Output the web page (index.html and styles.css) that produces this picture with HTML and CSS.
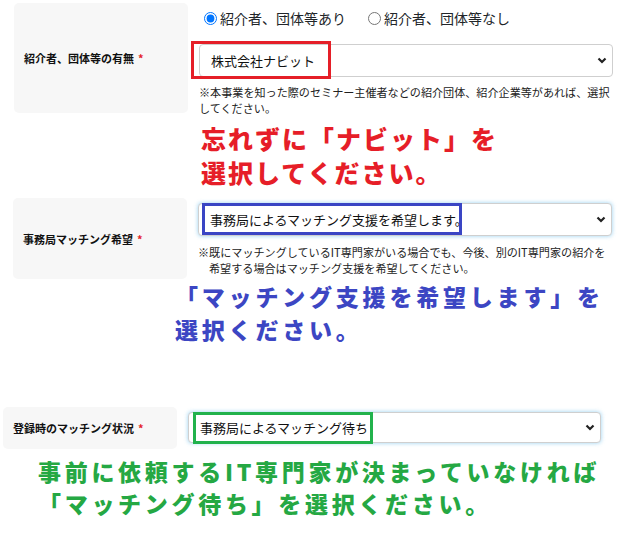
FILE: index.html
```html
<!DOCTYPE html>
<html lang="ja">
<head>
  <meta charset="UTF-8">
  <title>マッチング登録</title>
  <link rel="stylesheet" href="styles.css">
</head>
<body>
  <div class="field field-intro">
    <div class="label">紹介者、団体等の有無 <span class="req">*</span></div>
    <div class="control">
      <div class="radios">
        <label class="radio"><input type="radio" name="intro" checked> 紹介者、団体等あり</label>
        <label class="radio"><input type="radio" name="intro"> 紹介者、団体等なし</label>
      </div>
      <div class="select">
        <span>株式会社ナビット</span>
        <svg class="chevron" width="10" height="7" viewBox="0 0 10 7"><path d="M1.5 1.5 L5 5 L8.5 1.5" fill="none" stroke="#222" stroke-width="2.2"/></svg>
        <span class="mark mark-red"></span>
      </div>
      <p class="note">※本事業を知った際のセミナー主催者などの紹介団体、紹介企業等があれば、選択<br>してください。</p>
    </div>
  </div>
  <p class="callout callout-red">忘れずに「ナビット」を<br>選択してください。</p>

  <div class="field field-match">
    <div class="label">事務局マッチング希望 <span class="req">*</span></div>
    <div class="control">
      <div class="select focus">
        <span>事務局によるマッチング支援を希望します。</span>
        <svg class="chevron" width="10" height="7" viewBox="0 0 10 7"><path d="M1.5 1.5 L5 5 L8.5 1.5" fill="none" stroke="#222" stroke-width="2.2"/></svg>
        <span class="mark mark-blue"></span>
      </div>
      <p class="note note-hang">※既にマッチングしているIT専門家がいる場合でも、今後、別のIT専門家の紹介を<br>希望する場合はマッチング支援を希望してください。</p>
    </div>
  </div>
  <p class="callout callout-blue">「マッチング支援を希望します」を<br>選択ください。</p>

  <div class="field field-status">
    <div class="label">登録時のマッチング状況 <span class="req">*</span></div>
    <div class="control">
      <div class="select focus">
        <span>事務局によるマッチング待ち</span>
        <svg class="chevron" width="10" height="7" viewBox="0 0 10 7"><path d="M1.5 1.5 L5 5 L8.5 1.5" fill="none" stroke="#222" stroke-width="2.2"/></svg>
        <span class="mark mark-green"></span>
      </div>
    </div>
  </div>
  <p class="callout callout-green">事前に依頼するIT専門家が決まっていなければ<br>「マッチング待ち」を選択ください。</p>
</body>
</html>
```

FILE: styles.css
```css
body {
  margin: 0;
  background: #fff;
  color: #212529;
  font-family: "Noto Sans CJK JP", "Noto Sans", sans-serif;
}
p {
  margin: 0;
}
.field {
  display: flex;
  align-items: flex-start;
  gap: 11px;
}
.label {
  width: 174px;
  box-sizing: border-box;
  background: #f7f7f7;
  border-radius: 5px;
  display: flex;
  align-items: center;
  padding-left: 10px;
  font-size: 11px;
  font-weight: bold;
  color: #111;
}
.req {
  color: #e4242b;
  margin-left: 4px;
}
.control {
  width: 414px;
}
.field-intro {
  margin-top: 3px;
  padding-left: 14px;
}
.field-intro .label {
  height: 110px;
}
.field-match {
  margin-top: 9px;
  padding-left: 13px;
}
.field-match .label {
  height: 81px;
}
.field-match .select,
.field-status .select {
  margin-top: 5px;
}
.field-status {
  margin-top: 61px;
  padding-left: 3px;
}
.field-status .label {
  height: 42px;
  padding-left: 10px;
}
.field-status .control {
  width: 413px;
}
.radios {
  height: 30px;
  display: flex;
  align-items: center;
  gap: 22px;
  padding-left: 5px;
  font-size: 14px;
}
.radio {
  display: flex;
  align-items: center;
  gap: 3px;
}
.radio input {
  margin: 0;
  width: 13px;
  height: 13px;
}
.select {
  position: relative;
  height: 33px;
  box-sizing: border-box;
  border: 1px solid #cfcfcf;
  border-radius: 4px;
  background: #fff;
  display: flex;
  align-items: center;
  justify-content: space-between;
  padding: 0 5px 0 11px;
  font-size: 13px;
  color: #111;
}
.field-intro .select {
  margin-top: 11px;
}
.field-status .select {
  height: 31px;
  padding-left: 11px;
}
.select.focus {
  box-shadow: 0 0 4px rgba(110, 190, 235, 0.7);
}
.mark {
  position: absolute;
  box-sizing: border-box;
  border: 3px solid;
}
.mark-red {
  border-color: #e51f28;
  left: -9px;
  top: -4px;
  width: 140px;
  height: 38px;
}
.mark-blue {
  border-color: #3a45c4;
  left: 3px;
  top: -1px;
  width: 260px;
  height: 32px;
}
.mark-green {
  border-color: #22b24c;
  left: 4px;
  top: -1px;
  width: 180px;
  height: 32px;
}
.note {
  margin-top: 7px;
  font-size: 11.1px;
  line-height: 16px;
  color: #222;
}
.note-hang {
  margin-top: 8px;
  padding-left: 11px;
  text-indent: -11px;
}
.callout {
  font-weight: 900;
  white-space: nowrap;
}
.callout-red {
  color: #e61e28;
  margin-left: 201px;
  font-size: 25px;
  line-height: 34px;
  letter-spacing: 2px;
  margin-top: 5px;
}
.callout-blue {
  color: #3c46c3;
  margin-left: 175px;
  font-size: 23px;
  line-height: 33px;
  letter-spacing: 3.8px;
  margin-top: 1px;
}
.callout-green {
  color: #25a843;
  margin-left: 38px;
  font-size: 23px;
  line-height: 32px;
  letter-spacing: 3.7px;
  margin-top: 6px;
}
```
